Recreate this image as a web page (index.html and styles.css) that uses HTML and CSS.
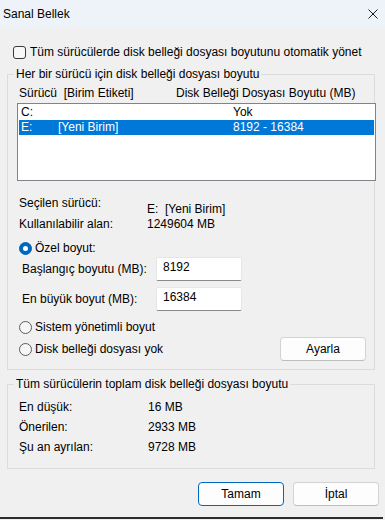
FILE: index.html
```html
<!DOCTYPE html>
<html lang="tr">
<head>
    <meta charset="UTF-8">
    <meta name="viewport" content="width=device-width, initial-scale=1.0">
    <title>Sanal Bellek</title>
    <link rel="stylesheet" href="styles.css">
</head>
<body>

<header class="titlebar">
    <span class="title">Sanal Bellek</span>
    <svg class="close" width="10" height="10" viewBox="0 0 10 10">
        <path d="M0.5 0.5 L9.5 9.5 M9.5 0.5 L0.5 9.5" stroke="#1b1b1b" stroke-width="1" fill="none"/>
    </svg>
</header>

<main class="dialog">
    <div class="check-row"><span class="checkbox"></span>Tüm sürücülerde disk belleği dosyası boyutunu otomatik yönet</div>

    <fieldset class="group group-drive">
        <legend>Her bir sürücü için disk belleği dosyası boyutu</legend>

        <div class="list-head">
            <span>Sürücü&nbsp; [Birim Etiketi]</span>
            <span>Disk Belleği Dosyası Boyutu (MB)</span>
        </div>

        <div class="listbox">
            <div class="list-row"><span>C:</span><span></span><span>Yok</span></div>
            <div class="list-row selected"><span>E:</span><span>[Yeni Birim]</span><span>8192 - 16384</span></div>
        </div>

        <div class="info">
            <span>Seçilen sürücü:</span><span class="drop">E:&nbsp; [Yeni Birim]</span>
            <span>Kullanılabilir alan:</span><span>1249604 MB</span>
        </div>

        <div class="radio-row first"><span class="radio on"></span>Özel boyut:</div>
        <div class="field-row"><span class="field-label">Başlangıç boyutu (MB):</span><div class="input">8192</div></div>
        <div class="field-row second"><span class="field-label">En büyük boyut (MB):</span><div class="input">16384</div></div>
        <div class="radio-row sys"><span class="radio"></span>Sistem yönetimli boyut</div>
        <div class="radio-row none"><span class="radio"></span>Disk belleği dosyası yok<button class="btn set-btn">Ayarla</button></div>
    </fieldset>

    <fieldset class="group group-total">
        <legend>Tüm sürücülerin toplam disk belleği dosyası boyutu</legend>
        <div class="stats">
            <span>En düşük:</span><span>16 MB</span>
            <span>Önerilen:</span><span>2933 MB</span>
            <span>Şu an ayrılan:</span><span>9728 MB</span>
        </div>
    </fieldset>

    <div class="actions">
        <button class="btn primary">Tamam</button>
        <button class="btn">İptal</button>
    </div>
</main>

<div class="frame-edge"></div>

</body>
</html>
```

FILE: styles.css
```css
body {
    margin: 0;
    background: #f0f0f0;
    font-family: "Liberation Sans", Arial, sans-serif;
    font-size: 12px;
    line-height: 15px;
    color: #000;
}

.titlebar {
    height: 28px;
    display: flex;
    align-items: center;
    justify-content: space-between;
    padding: 0 7px 0 3px;
    background: #eef3f9;
}

.close {
    display: block;
}

.check-row {
    display: flex;
    align-items: center;
    gap: 4px;
    margin-top: 17px;
    padding-left: 13px;
}

.checkbox {
    width: 13px;
    height: 13px;
    box-sizing: border-box;
    border: 1px solid #3a3a3a;
    border-radius: 3px;
    background: #f8f8f8;
}

.group {
    margin: 7px 10px 0 7px;
    padding: 0;
    border: 1px solid #dcdcdc;
    min-width: 0;
}

.group legend {
    margin-left: 6px;
    padding: 0 2px;
}

.list-head {
    display: grid;
    grid-template-columns: 157px 1fr;
    margin-top: 4px;
    padding-left: 11px;
}

.listbox {
    margin: 2px -2px 0 9px;
    height: 78px;
    box-sizing: border-box;
    border: 1px solid #7f848c;
    background: #fff;
    padding: 1px;
}

.list-row {
    display: grid;
    grid-template-columns: 37px 175px 1fr;
    height: 15px;
    padding-left: 2px;
}

.list-row.selected {
    background: #0078d7;
    color: #fff;
}

.info {
    display: grid;
    grid-template-columns: 128px 1fr;
    margin-top: 15px;
    padding-left: 11px;
}

.info .drop {
    padding-top: 6px;
}

.radio-row {
    display: flex;
    align-items: center;
    gap: 3px;
    padding-left: 11px;
}

.radio-row.first { margin-top: 9px; }
.radio-row.sys { margin-top: 9px; }
.radio-row.none { margin-top: 2px; padding-right: 8px; padding-bottom: 8px; }

.radio {
    position: relative;
    width: 13px;
    height: 13px;
    box-sizing: border-box;
    border: 1px solid #5c5c5c;
    border-radius: 50%;
    background: #f6f6f6;
}

.radio.on {
    background: #0067c0;
    border-color: #0067c0;
}

.radio.on::after {
    content: "";
    position: absolute;
    left: 3px;
    top: 3px;
    width: 5px;
    height: 5px;
    border-radius: 50%;
    background: #fff;
}

.field-row {
    display: flex;
    align-items: center;
    margin-top: 1px;
    padding-left: 14px;
}

.field-row.second { margin-top: 6px; }

.field-label {
    width: 134px;
}

.input {
    width: 86px;
    height: 24px;
    box-sizing: border-box;
    padding: 2px 0 0 6px;
    background: #fff;
    border: 1px solid #e6e6e6;
    border-bottom-color: #8a8a8a;
    border-radius: 2px;
}

.btn {
    width: 86px;
    height: 24px;
    padding: 0;
    font: inherit;
    color: #000;
    background: #fdfdfd;
    border: 1px solid #d3d3d3;
    border-bottom-color: #bdbdbd;
    border-radius: 4px;
}

.set-btn {
    margin-left: auto;
}

.btn.primary {
    border-color: #0067c0;
}

.group-total .stats {
    display: grid;
    grid-template-columns: 129px 1fr;
    row-gap: 5px;
    margin-top: 8px;
    padding: 0 0 13px 11px;
}

.actions {
    display: flex;
    justify-content: flex-end;
    gap: 9px;
    margin-top: 13px;
    padding-right: 6px;
}

.frame-edge {
    width: 383px;
    height: 2px;
    margin-top: 11px;
    background: #2d2d2d;
}
```
